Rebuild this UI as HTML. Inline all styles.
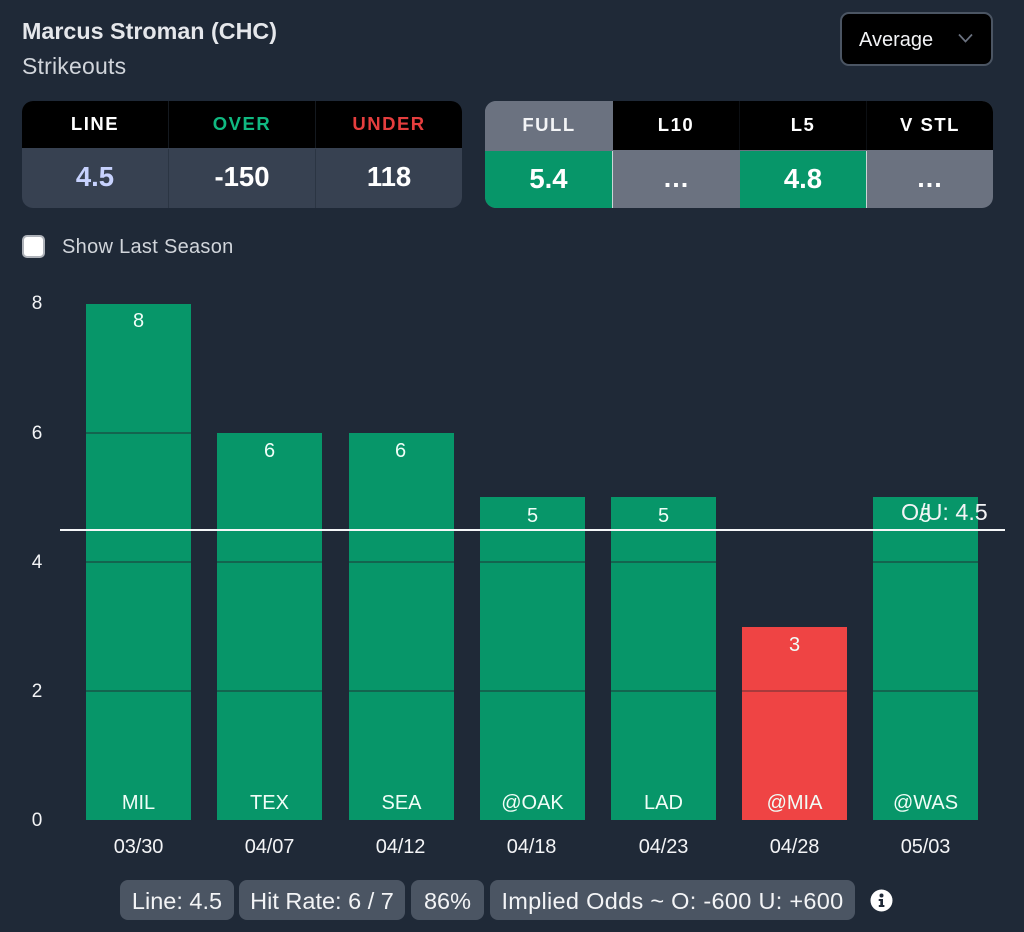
<!DOCTYPE html>
<html>
<head>
<meta charset="utf-8">
<style>
html,body{margin:0;padding:0;background:#1f2937;}
body{width:1024px;height:932px;position:relative;overflow:hidden;font-family:"Liberation Sans",sans-serif;color:#fff;}
.a{position:absolute;white-space:nowrap;}
.c{position:absolute;display:flex;align-items:center;justify-content:center;box-sizing:border-box;white-space:nowrap;}
.h{font-weight:700;font-size:18.5px;letter-spacing:1.5px;padding-bottom:2px;}
.v{font-weight:700;font-size:27.5px;padding-bottom:1px;}
.l{padding-bottom:3px;}
.dots{letter-spacing:1px;font-size:27px;padding-bottom:3px;}
.bar{position:absolute;width:105px;background:#079669;}
.grid{position:absolute;left:0;width:105px;height:2px;background:#13654f;}
.t{position:absolute;left:0;width:105px;text-align:center;font-size:20px;line-height:24px;color:#f0fdf7;}
.b{font-size:20px;}
.y{position:absolute;left:12px;width:50px;text-align:center;font-size:19px;line-height:24px;color:#f3f4f6;}
.d{position:absolute;width:105px;text-align:center;font-size:20px;line-height:24px;color:#f3f4f6;letter-spacing:-.1px;}
.chip{position:absolute;top:880px;height:40px;padding-top:3px;box-sizing:border-box;background:#4b5563;border-radius:8px;display:flex;align-items:center;justify-content:center;font-size:23.5px;color:#f3f4f6;white-space:nowrap;}
</style>
</head>
<body>
<div class="a" style="left:22px;top:17px;font-size:23.3px;font-weight:700;line-height:28px;color:#e5e7eb;">Marcus Stroman (CHC)</div>
<div class="a" style="left:22px;top:52px;font-size:23px;line-height:28px;color:#d1d5db;letter-spacing:.2px;">Strikeouts</div>

<div class="c" style="left:840px;top:12px;width:153px;height:54px;background:#000;border:2px solid #4b5563;border-radius:9px;"></div>
<div class="a" style="left:859px;top:27px;font-size:20px;line-height:26px;color:#f3f4f6;">Average</div>
<svg class="a" style="left:956px;top:32px;" width="20" height="14" viewBox="0 0 20 14"><path d="M3 2.5 L9.5 9.5 L16 2.5" fill="none" stroke="#6b7280" stroke-width="1.7"/></svg>

<!-- left table -->
<div class="a" style="left:22px;top:101px;width:440px;height:107px;border-radius:11px;overflow:hidden;background:#374151;">
  <div class="c h" style="left:0;top:0;width:147px;height:47px;background:#000;border-right:1px solid #14191f;">LINE</div>
  <div class="c h" style="left:147px;top:0;width:147px;height:47px;background:#000;border-right:1px solid #14191f;color:#10b981;">OVER</div>
  <div class="c h" style="left:294px;top:0;width:146px;height:47px;background:#000;color:#e53e3e;">UNDER</div>
  <div class="c v l" style="left:0;top:48px;width:147px;height:59px;color:#c7d2fe;border-right:1px solid #2b3543;">4.5</div>
  <div class="c v l" style="left:147px;top:48px;width:147px;height:59px;border-right:1px solid #2b3543;">-150</div>
  <div class="c v l" style="left:294px;top:48px;width:146px;height:59px;">118</div>
</div>

<!-- right table -->
<div class="a" style="left:485px;top:101px;width:508px;height:107px;border-radius:11px;overflow:hidden;background:#6b7280;">
  <div class="c h" style="left:0;top:0;width:128px;height:49px;background:#6b7280;color:#f3f4f6;">FULL</div>
  <div class="c h" style="left:128px;top:0;width:127px;height:49px;background:#000;border-right:1px solid #0c0f13;">L10</div>
  <div class="c h" style="left:255px;top:0;width:127px;height:49px;background:#000;border-right:1px solid #0c0f13;">L5</div>
  <div class="c h" style="left:382px;top:0;width:126px;height:49px;background:#000;">V STL</div>
  <div class="c v" style="left:0;top:50px;width:128px;height:57px;background:#079669;border-right:1px solid #cbd5d5;">5.4</div>
  <div class="c v dots" style="left:128px;top:50px;width:127px;height:57px;">...</div>
  <div class="c v" style="left:255px;top:50px;width:127px;height:57px;background:#079669;border-right:1px solid #cbd5d5;">4.8</div>
  <div class="c v dots" style="left:382px;top:50px;width:126px;height:57px;">...</div>
</div>

<div class="a" style="left:22px;top:235px;width:23px;height:23px;box-sizing:border-box;background:#fff;border:2px solid #aeb2b9;border-radius:5px;"></div>
<div class="a" style="left:62px;top:234px;font-size:20px;line-height:26px;color:#d1d5db;letter-spacing:.3px;">Show Last Season</div>

<!-- y axis -->
<div class="y" style="top:292px;">8</div>
<div class="y" style="top:422px;">6</div>
<div class="y" style="top:551px;">4</div>
<div class="y" style="top:680px;">2</div>
<div class="y" style="top:809px;">0</div>

<!-- bars -->
<div class="bar" style="left:86px;top:304px;height:516px;">
  <div class="t" style="top:5px;">8</div>
  <div class="grid" style="top:128px;"></div><div class="grid" style="top:257px;"></div><div class="grid" style="top:386px;"></div>
  <div class="t b" style="top:487px;">MIL</div>
</div>
<div class="bar" style="left:217px;top:433px;height:387px;">
  <div class="t" style="top:6px;">6</div>
  <div class="grid" style="top:128px;"></div><div class="grid" style="top:257px;"></div>
  <div class="t b" style="top:358px;">TEX</div>
</div>
<div class="bar" style="left:349px;top:433px;height:387px;">
  <div class="t" style="top:6px;left:-1px;">6</div>
  <div class="grid" style="top:128px;"></div><div class="grid" style="top:257px;"></div>
  <div class="t b" style="top:358px;">SEA</div>
</div>
<div class="bar" style="left:480px;top:497px;height:323px;">
  <div class="t" style="top:7px;">5</div>
  <div class="grid" style="top:64px;"></div><div class="grid" style="top:193px;"></div>
  <div class="t b" style="top:294px;">@OAK</div>
</div>
<div class="bar" style="left:611px;top:497px;height:323px;">
  <div class="t" style="top:7px;">5</div>
  <div class="grid" style="top:64px;"></div><div class="grid" style="top:193px;"></div>
  <div class="t b" style="top:294px;">LAD</div>
</div>
<div class="bar" style="left:742px;top:627px;height:193px;background:#ef4444;">
  <div class="t" style="top:6px;">3</div>
  <div class="grid" style="top:63px;background:#a83a3c;"></div>
  <div class="t b" style="top:164px;">@MIA</div>
</div>
<div class="bar" style="left:873px;top:497px;height:323px;">
  <div class="t" style="top:7px;">5</div>
  <div class="grid" style="top:64px;"></div><div class="grid" style="top:193px;"></div>
  <div class="t b" style="top:294px;">@WAS</div>
</div>

<div class="a" style="left:60px;top:529px;width:945px;height:2px;background:#f5f7f8;"></div>
<div class="a" style="left:901px;top:498px;font-size:23.3px;line-height:28px;color:#f3f4f6;">O/U: 4.5</div>

<div class="d" style="left:86px;top:835px;">03/30</div>
<div class="d" style="left:217px;top:835px;">04/07</div>
<div class="d" style="left:348px;top:835px;">04/12</div>
<div class="d" style="left:479px;top:835px;">04/18</div>
<div class="d" style="left:611px;top:835px;">04/23</div>
<div class="d" style="left:742px;top:835px;">04/28</div>
<div class="d" style="left:873px;top:835px;">05/03</div>

<div class="chip" style="left:120px;width:114px;">Line: 4.5</div>
<div class="chip" style="left:239px;width:166px;">Hit Rate: 6 / 7</div>
<div class="chip" style="left:411px;width:73px;">86%</div>
<div class="chip" style="left:490px;width:365px;letter-spacing:.3px;">Implied Odds ~ O: -600 U: +600</div>

<svg class="a" style="left:870px;top:889px;" width="23" height="23" viewBox="0 0 23 23">
  <circle cx="11.5" cy="11.5" r="11" fill="#fff"/>
  <circle cx="11.5" cy="6.5" r="2" fill="#1f2937"/>
  <path d="M8.7 10h4.3v6h1.4v2H8.8v-2h1.5v-4H8.7z" fill="#1f2937"/>
</svg>
</body>
</html>
